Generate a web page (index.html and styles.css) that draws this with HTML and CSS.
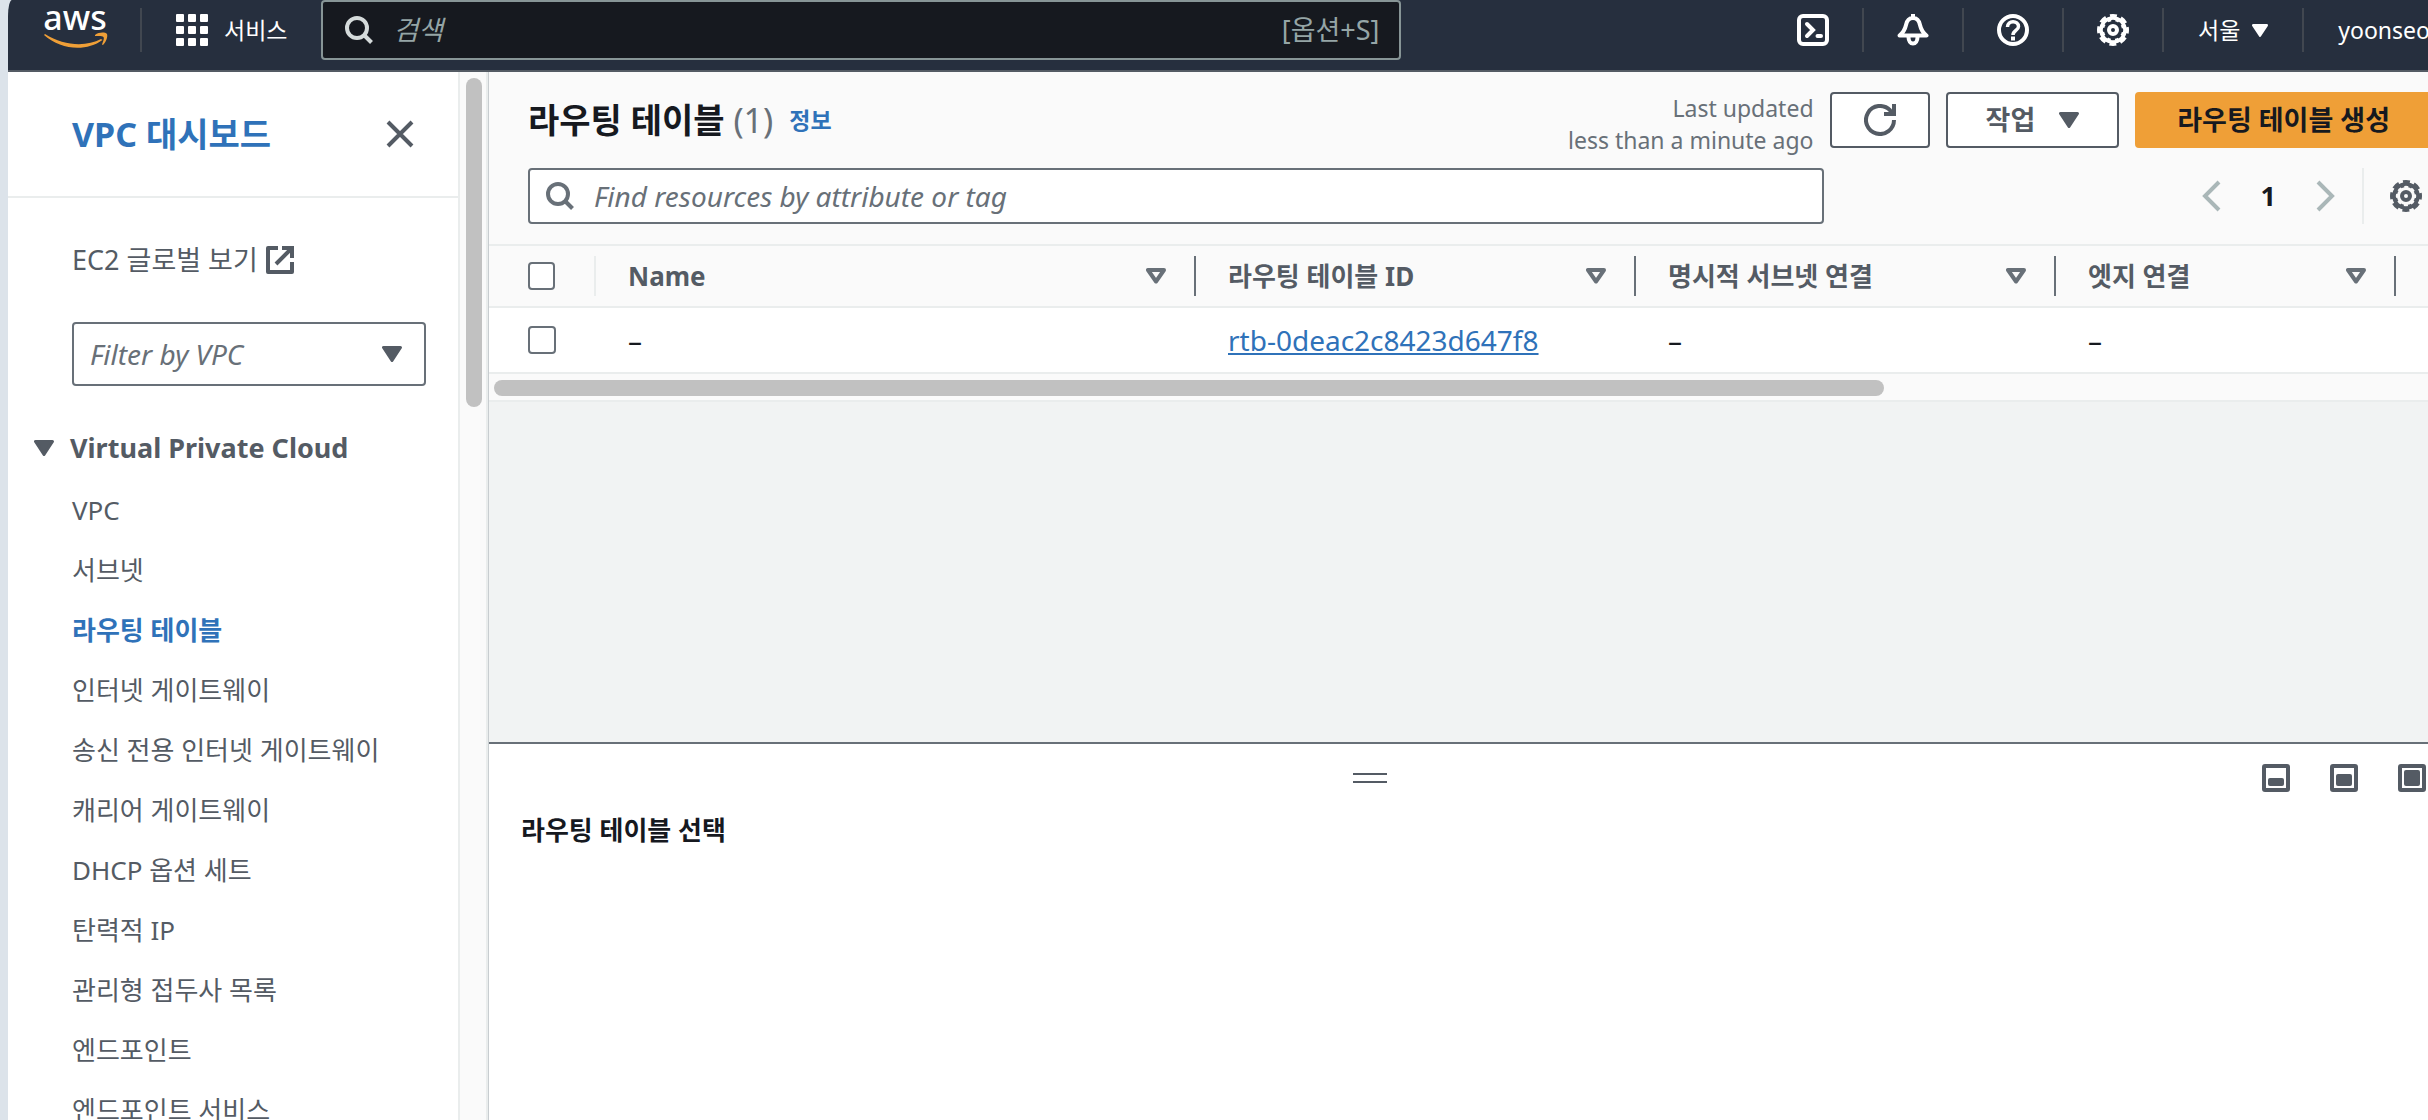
FILE: index.html
```html
<!DOCTYPE html>
<html lang="ko">
<head>
    <meta charset="UTF-8">
    <meta name="viewport" content="width=device-width, initial-scale=1.0">
    <title>라우팅 테이블 | VPC 관리 콘솔</title>
    <link rel="stylesheet" href="styles.css">
</head>
<body>
    <!-- shared icons -->
    <svg class="defs" aria-hidden="true">
        <symbol id="icon-gear" viewBox="0 0 32 32">
            <g fill="none" stroke="currentColor">
                <circle cx="16" cy="16" r="12" stroke-width="3.500"/>
                <circle cx="16" cy="16" r="14.500" stroke-width="3" stroke-dasharray="7 4.388" stroke-dashoffset="3.500"/>
                <circle cx="16" cy="16" r="10" stroke-width="2" stroke-dasharray="3.500 4.354" stroke-dashoffset="-2.177"/>
                <circle cx="16" cy="16" r="4" stroke-width="4"/>
            </g>
        </symbol>
        <symbol id="icon-search" viewBox="0 0 28 28">
            <circle cx="12" cy="12" r="10" fill="none" stroke="currentColor" stroke-width="4"/>
            <path d="M18.500 18.500 26.500 26.500" fill="none" stroke="currentColor" stroke-width="4"/>
        </symbol>
        <symbol id="icon-caret" viewBox="0 0 20 16">
            <path d="M1.500 1.500h17L10 14.500z" fill="currentColor" stroke="currentColor" stroke-width="3" stroke-linejoin="round"/>
        </symbol>
        <symbol id="icon-sort" viewBox="0 0 20 16">
            <path d="M2 2h16L10 13.500z" fill="none" stroke="currentColor" stroke-width="4" stroke-linejoin="round"/>
        </symbol>
    </svg>

    <div class="console">
        <header class="topnav">
            <a class="logo" href="#" aria-label="aws">
                <svg width="64" height="52" viewBox="0 3 64 52">
                    <text class="logo-text" x="31" y="33" text-anchor="middle">aws</text>
                    <path d="M1 37C20 49 42 50 57 42l1.500 1C42 55 17 53 0 38z" fill="#ef9f37"/>
                    <path d="M51 38c4-3 10-3 12-1 1 3-1 8-4 11l-1-.5c1-3 2.500-6 1.500-7.500-1.500-1.500-5-1-8.500-1z" fill="#ef9f37"/>
                </svg>
            </a>
            <button class="services" type="button">
                <svg width="32" height="32" viewBox="0 0 32 32" fill="currentColor">
                    <rect width="8" height="8" rx="1"/><rect x="12" width="8" height="8" rx="1"/><rect x="24" width="8" height="8" rx="1"/>
                    <rect y="12" width="8" height="8" rx="1"/><rect x="12" y="12" width="8" height="8" rx="1"/><rect x="24" y="12" width="8" height="8" rx="1"/>
                    <rect y="24" width="8" height="8" rx="1"/><rect x="12" y="24" width="8" height="8" rx="1"/><rect x="24" y="24" width="8" height="8" rx="1"/>
                </svg>
                서비스
            </button>
            <label class="nav-search">
                <svg class="icon-28"><use href="#icon-search"/></svg>
                <input type="search" placeholder="검색" aria-label="검색">
                <span>[옵션+S]</span>
            </label>
            <nav class="nav-tools">
                <button type="button" aria-label="CloudShell">
                    <svg width="32" height="32" viewBox="0 0 32 32" fill="none" stroke="currentColor" stroke-width="4">
                        <rect x="2" y="2" width="28" height="28" rx="4"/>
                        <path d="M10 10l6 6-6 6M20.500 22h3.500" stroke-linecap="round"/>
                    </svg>
                </button>
                <button type="button" aria-label="알림">
                    <svg width="32" height="32" viewBox="0 0 32 32" fill="none" stroke="currentColor" stroke-width="4" stroke-linejoin="round">
                        <path d="M16 0v4M2.500 21.500c4-3 5.500-6 6.500-10.500C10 6 12.500 4 16 4s6 2 7 7c1 4.500 2.500 7.500 6.500 10.500z"/>
                        <path d="M11.500 23c0 4 2 6.500 4.500 6.500s4.500-2.500 4.500-6.500"/>
                    </svg>
                </button>
                <button type="button" aria-label="도움말">
                    <svg width="32" height="32" viewBox="0 0 32 32" fill="none" stroke="currentColor" stroke-width="4">
                        <circle cx="16" cy="16" r="14"/>
                        <path d="M10.500 13c0-7 11-7 11-.5 0 4-5.500 4-5.500 8.500" stroke-width="3.500"/>
                        <path d="M16 22.500v4"/>
                    </svg>
                </button>
                <button type="button" aria-label="설정">
                    <svg class="icon-32"><use href="#icon-gear"/></svg>
                </button>
                <button class="nav-text" type="button">서울 <svg class="caret-small"><use href="#icon-caret"/></svg></button>
                <button class="nav-text nav-user" type="button">yoonseo</button>
            </nav>
        </header>

        <div class="body">
            <aside class="sidebar">
                <div class="sidebar-head">
                    <h2><a href="#">VPC 대시보드</a></h2>
                    <button class="plain" type="button" aria-label="닫기">
                        <svg width="28" height="28" viewBox="0 0 28 28"><path d="M2 2l24 24M26 2L2 26" stroke="currentColor" stroke-width="4"/></svg>
                    </button>
                </div>
                <div class="sidebar-body">
                    <a class="global-view" href="#">EC2 글로벌 보기
                        <svg width="28" height="28" viewBox="0 0 28 28" fill="none" stroke="currentColor" stroke-width="4">
                            <path d="M12 2H2v24h24V16" stroke-linejoin="round"/>
                            <path d="M16 2h10v10M26 2L10 18"/>
                        </svg>
                    </a>
                    <div class="vpc-filter">
                        <select aria-label="Filter by VPC">
                            <option>Filter by VPC</option>
                        </select>
                        <svg class="caret"><use href="#icon-caret"/></svg>
                    </div>
                    <button class="section-toggle" type="button">
                        <svg class="caret"><use href="#icon-caret"/></svg>Virtual Private Cloud
                    </button>
                    <ul class="menu">
                        <li><a href="#">VPC</a></li>
                        <li><a href="#">서브넷</a></li>
                        <li><a class="active" href="#">라우팅 테이블</a></li>
                        <li><a href="#">인터넷 게이트웨이</a></li>
                        <li><a href="#">송신 전용 인터넷 게이트웨이</a></li>
                        <li><a href="#">캐리어 게이트웨이</a></li>
                        <li><a href="#">DHCP 옵션 세트</a></li>
                        <li><a href="#">탄력적 IP</a></li>
                        <li><a href="#">관리형 접두사 목록</a></li>
                        <li><a href="#">엔드포인트</a></li>
                        <li><a href="#">엔드포인트 서비스</a></li>
                    </ul>
                </div>
            </aside>
            <div class="scroll-y"><div class="thumb-y"></div></div>

            <main class="main">
                <section class="resources">
                    <div class="title-row">
                        <h1>라우팅 테이블 <span class="count">(1)</span></h1>
                        <a class="info" href="#">정보</a>
                        <p class="updated">Last updated<br>less than a minute ago</p>
                        <button class="btn" type="button" aria-label="새로 고침">
                            <svg width="32" height="32" viewBox="0 0 32 32" fill="none" stroke="currentColor" stroke-width="4">
                                <path d="M30 16a14 14 0 1 1-4-9.800l3 3.800"/>
                                <path d="M30 0v10H20"/>
                            </svg>
                        </button>
                        <button class="btn" type="button">작업 <svg class="caret"><use href="#icon-caret"/></svg></button>
                        <button class="btn btn-primary" type="button">라우팅 테이블 생성</button>
                    </div>
                    <div class="filter-row">
                        <label class="filter">
                            <svg class="icon-28"><use href="#icon-search"/></svg>
                            <input type="text" placeholder="Find resources by attribute or tag" aria-label="Find resources by attribute or tag">
                        </label>
                        <div class="pager">
                            <button class="plain arrow" type="button" aria-label="이전">
                                <svg width="20" height="32" viewBox="0 0 20 32"><path d="M18 2L4 16l14 14" fill="none" stroke="currentColor" stroke-width="4"/></svg>
                            </button>
                            <span class="page">1</span>
                            <button class="plain arrow" type="button" aria-label="다음">
                                <svg width="20" height="32" viewBox="0 0 20 32"><path d="M2 2l14 14L2 30" fill="none" stroke="currentColor" stroke-width="4"/></svg>
                            </button>
                            <button class="plain prefs" type="button" aria-label="기본 설정">
                                <svg class="icon-32"><use href="#icon-gear"/></svg>
                            </button>
                        </div>
                    </div>
                    <table class="grid">
                        <colgroup>
                            <col class="col-check"><col class="col-name"><col class="col-id"><col class="col-subnet"><col class="col-edge"><col>
                        </colgroup>
                        <thead>
                            <tr>
                                <th class="check"><div><input type="checkbox" aria-label="모두 선택"></div></th>
                                <th><div>Name <svg class="caret"><use href="#icon-sort"/></svg></div></th>
                                <th><div>라우팅 테이블 ID <svg class="caret"><use href="#icon-sort"/></svg></div></th>
                                <th><div>명시적 서브넷 연결 <svg class="caret"><use href="#icon-sort"/></svg></div></th>
                                <th><div>엣지 연결 <svg class="caret"><use href="#icon-sort"/></svg></div></th>
                                <th></th>
                            </tr>
                        </thead>
                        <tbody>
                            <tr>
                                <td class="check"><input type="checkbox" aria-label="rtb-0deac2c8423d647f8 선택"></td>
                                <td>–</td>
                                <td><a href="#">rtb-0deac2c8423d647f8</a></td>
                                <td>–</td>
                                <td>–</td>
                                <td></td>
                            </tr>
                        </tbody>
                    </table>
                    <div class="scroll-x"><div class="thumb-x"></div></div>
                </section>

                <section class="split-panel">
                    <div class="panel-bar">
                        <div class="handle"></div>
                        <div class="panel-sizes">
                            <button class="plain" type="button" aria-label="작게">
                                <svg width="28" height="28" viewBox="0 0 28 28"><rect x="2" y="2" width="24" height="24" rx="1" fill="none" stroke="currentColor" stroke-width="4"/><rect x="6" y="14" width="16" height="8" rx="2" fill="currentColor"/></svg>
                            </button>
                            <button class="plain" type="button" aria-label="중간">
                                <svg width="28" height="28" viewBox="0 0 28 28"><rect x="2" y="2" width="24" height="24" rx="1" fill="none" stroke="currentColor" stroke-width="4"/><rect x="6" y="10" width="16" height="12" rx="2" fill="currentColor"/></svg>
                            </button>
                            <button class="plain" type="button" aria-label="크게">
                                <svg width="28" height="28" viewBox="0 0 28 28"><rect x="2" y="2" width="24" height="24" rx="1" fill="none" stroke="currentColor" stroke-width="4"/><rect x="6" y="6" width="16" height="16" rx="2" fill="currentColor"/></svg>
                            </button>
                        </div>
                    </div>
                    <h3>라우팅 테이블 선택</h3>
                </section>
            </main>
        </div>
    </div>
</body>
</html>
```

FILE: styles.css
```css
* {
    box-sizing: border-box;
}
body {
    margin: 0;
    padding-left: 8px;
    height: 100vh;
    overflow: hidden;
    background-color: #dce3ea;
    font-family: "Noto Sans", "Noto Sans CJK KR", sans-serif;
    font-size: 27px;
    line-height: 40px;
    color: #16191f;
}
h1, h2, h3, p, ul {
    margin: 0;
    padding: 0;
}
button, input, select {
    font: inherit;
    color: inherit;
}
button {
    cursor: pointer;
}
a {
    color: #2f72b9;
}
svg {
    display: block;
    flex: none;
}
.defs {
    position: absolute;
    width: 0;
    height: 0;
}
.icon-32 {
    width: 32px;
    height: 32px;
}
.icon-28 {
    width: 28px;
    height: 28px;
}
.caret {
    width: 20px;
    height: 16px;
}
.caret-small {
    width: 16px;
    height: 13px;
}
.plain {
    padding: 0;
    border: 0;
    background: none;
    color: #545b64;
}

/* the console runs a little past the right edge of the window */
.console {
    display: flex;
    flex-direction: column;
    width: calc(100% + 40px);
    height: 100%;
}

/* top navigation */
.topnav {
    display: flex;
    flex: none;
    height: 72px;
    padding-bottom: 10px;
    border-bottom: 2px solid #545b64;
    border-top-left-radius: 4px 16px;
    background-color: #262f3e;
    color: #fff;
    font-size: 23px;
}
.logo {
    display: flex;
    align-items: flex-end;
    height: 44px;
    margin-top: 8px;
    padding: 0 32px 0 36px;
    border-right: 2px solid #414750;
}
.logo svg {
    overflow: visible;
}
.logo-text {
    font-size: 34px;
    font-weight: 500;
    line-height: 34px;
    fill: #fff;
}
.services {
    display: flex;
    align-items: center;
    gap: 16px;
    padding: 0 34px;
    border: 0;
    background: none;
}
.nav-search {
    display: flex;
    align-items: center;
    flex: 0 1 1080px;
    gap: 20px;
    padding: 0 20px 0 22px;
    border: 2px solid #879596;
    border-radius: 4px;
    background-color: #16191f;
    color: #95a5a6;
    font-size: 27px;
}
.nav-search svg {
    color: #d5dbdb;
}
.nav-search input, .filter input {
    flex: 1;
    min-width: 0;
    padding: 0;
    border: 0;
    outline: 0;
    background: none;
}
input::placeholder {
    color: inherit;
    font-style: italic;
    opacity: 1;
}
.nav-tools {
    display: flex;
    align-items: center;
    margin-left: auto;
}
.nav-tools button {
    display: flex;
    align-items: center;
    height: 44px;
    padding: 0 33px;
    border: 0;
    border-right: 2px solid #414750;
    background: none;
}
.nav-tools .nav-text {
    gap: 12px;
    padding: 0 34px;
}
.nav-tools .nav-user {
    padding-right: 38px;
    border-right: 0;
}

/* sidebar */
.body {
    display: flex;
    flex: 1;
    min-height: 0;
}
.sidebar {
    flex: 0 0 452px;
    overflow: hidden;
    border-right: 2px solid #eaeded;
    background-color: #fff;
}
.sidebar-head {
    display: flex;
    align-items: center;
    justify-content: space-between;
    height: 126px;
    padding: 0 44px 0 64px;
    border-bottom: 2px solid #eaeded;
}
h1, h2 {
    font-size: 34px;
}
h2 a {
    text-decoration: none;
}
.sidebar-body {
    padding: 42px 32px 0 64px;
    color: #545b64;
}
.global-view {
    display: flex;
    align-items: center;
    gap: 8px;
    color: inherit;
    text-decoration: none;
}
.vpc-filter {
    position: relative;
    margin: 42px 0;
}
.vpc-filter select {
    display: block;
    width: 100%;
    height: 64px;
    padding: 0 16px;
    border: 2px solid #687078;
    border-radius: 4px;
    appearance: none;
    background-color: #fff;
    color: #687078;
    font-size: 28px;
    font-style: italic;
}
.vpc-filter svg {
    position: absolute;
    top: 24px;
    right: 24px;
    pointer-events: none;
}
.section-toggle {
    display: flex;
    align-items: center;
    gap: 16px;
    margin: 0 0 22px -38px;
    padding: 0;
    border: 0;
    background: none;
    font-weight: bold;
}
.menu {
    display: flex;
    flex-direction: column;
    gap: 20px;
    list-style: none;
    font-size: 26px;
}
.menu a {
    display: block;
    color: #545b64;
    text-decoration: none;
}
.menu .active {
    color: #2f72b9;
    font-weight: bold;
}
.scroll-y {
    flex: 0 0 28px;
    padding: 6px 4px 6px 6px;
    border-right: 2px solid #eaeded;
    background-color: #fafafa;
}
.thumb-y {
    width: 16px;
    height: 329px;
    border-radius: 8px;
    background-color: #c1c1c1;
}

/* main area */
.main {
    display: flex;
    flex: 1;
    flex-direction: column;
    justify-content: space-between;
    min-width: 0;
    border-left: 1px solid #c8cdd0;
    background-color: #f1f3f3;
}
.resources {
    border-bottom: 2px solid #eaeded;
    background-color: #fafafa;
}
.title-row {
    display: flex;
    align-items: center;
    gap: 16px;
    height: 96px;
    padding: 0 36px 0 39px;
}
.count {
    color: #687078;
    font-weight: normal;
}
.info {
    font-size: 23px;
    font-weight: bold;
    text-decoration: none;
}
.updated {
    margin-left: auto;
    padding-top: 8px;
    color: #687078;
    font-size: 23px;
    line-height: 32px;
    text-align: right;
}
.btn {
    display: flex;
    align-items: center;
    gap: 24px;
    height: 56px;
    padding: 0 38px;
    border: 2px solid #545b64;
    border-radius: 4px;
    background-color: #fff;
    color: #545b64;
    font-weight: bold;
}
.btn-primary {
    padding: 0 40px;
    border-color: #ef9f37;
    background-color: #ef9f37;
    color: #16191f;
}
.btn:first-of-type {
    padding: 0 32px;
}
.filter-row {
    display: flex;
    justify-content: space-between;
    padding: 0 46px 20px 39px;
}
.filter {
    display: flex;
    align-items: center;
    flex: 0 1 1296px;
    gap: 20px;
    height: 56px;
    padding: 0 16px;
    border: 2px solid #687078;
    border-radius: 4px;
    background-color: #fff;
    color: #687078;
    font-size: 28px;
}
.pager {
    display: flex;
    align-items: center;
    gap: 40px;
}
.page {
    font-weight: bold;
}
.arrow {
    color: #aab7b8;
}
.prefs {
    display: flex;
    align-items: center;
    height: 56px;
    margin-left: -14px;
    padding-left: 26px;
    border-left: 2px solid #eaeded;
}

/* table */
.grid {
    width: 100%;
    border-collapse: collapse;
    table-layout: fixed;
    border-top: 2px solid #eaeded;
}
.col-check {
    width: 107px;
}
.col-name {
    width: 600px;
}
.col-id {
    width: 440px;
}
.col-subnet {
    width: 420px;
}
.col-edge {
    width: 340px;
}
.grid th {
    padding: 10px 0;
    border-bottom: 2px solid #eaeded;
    color: #545b64;
    font-size: 26px;
    text-align: left;
}
.grid th div {
    display: flex;
    align-items: center;
    justify-content: space-between;
    height: 40px;
    padding: 0 28px 0 32px;
    border-right: 2px solid #687078;
}
.grid th svg {
    color: #687078;
}
.grid td {
    height: 66px;
    padding: 0 32px;
    border-bottom: 2px solid #eaeded;
    background-color: #fff;
    font-size: 28px;
}
.grid th.check div {
    padding: 0 39px;
    border-right-color: #eaeded;
}
.grid td.check {
    padding: 0 39px;
}
.grid input {
    display: block;
    width: 28px;
    height: 28px;
    margin: 0;
    border: 2px solid #687078;
    border-radius: 4px;
    appearance: none;
    background-color: #fff;
}
.scroll-x {
    padding: 6px 5px 4px;
}
.thumb-x {
    width: 1390px;
    max-width: 100%;
    height: 16px;
    border-radius: 8px;
    background-color: #c1c1c1;
}

/* split panel */
.split-panel {
    height: 378px;
    border-top: 2px solid #687078;
    background-color: #fff;
}
.panel-bar {
    display: flex;
    align-items: center;
    height: 68px;
    padding-right: 42px;
}
.handle {
    width: 34px;
    height: 10px;
    margin: 0 auto;
    border: solid #545b64;
    border-width: 2px 0;
}
.panel-sizes {
    display: flex;
    gap: 40px;
    padding-left: 12px;
}
h3 {
    padding: 0 32px;
    font-size: 26px;
    line-height: 36px;
}
```
